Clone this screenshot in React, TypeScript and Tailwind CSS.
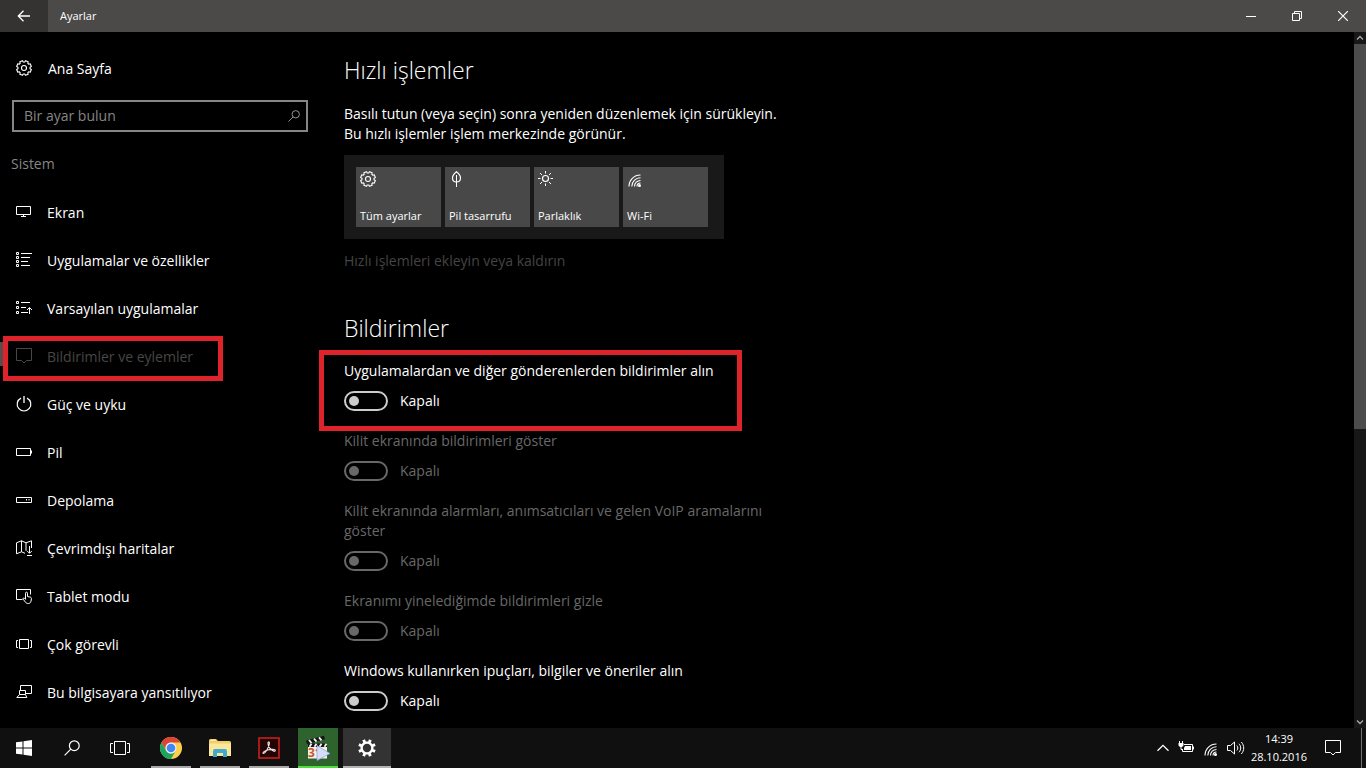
import React from 'react';

type IconProps = { className?: string };

// Outline of a cog wheel around (c, c)
const gearPath = (c: number, outer: number, inner: number, teeth: number, top: number, base: number) => {
    const points: string[] = [];
    for (let i = 0; i < teeth; i++) {
        const mid = ((i + 0.5) / teeth) * Math.PI * 2 - Math.PI / 2;
        const corners = [[inner, -base], [outer, -top], [outer, top], [inner, base]];
        corners.forEach(([r, offset]) => {
            points.push(`${(c + r * Math.cos(mid + offset)).toFixed(2)} ${(c + r * Math.sin(mid + offset)).toFixed(2)}`);
        });
    }
    return `M${points.join('L')}Z`;
};

const GearIcon: React.FC<IconProps> = ({ className }) => (
    <svg className={className} width="16" height="16" viewBox="0 0 16 16" fill="none" stroke="currentColor" strokeWidth="1.1" strokeLinejoin="round">
        <path d={gearPath(8, 7.5, 6.1, 8, 0.2, 0.27)} />
        <circle cx="8" cy="8" r="2.5" />
    </svg>
);

const SolidGearIcon: React.FC<IconProps> = ({ className }) => (
    <svg className={className} width="18" height="18" viewBox="0 0 18 18" fill="currentColor" fillRule="evenodd">
        <path d={`${gearPath(9, 8.9, 6.6, 8, 0.17, 0.21)}M9 4.8a4.2 4.2 0 1 0 0 8.4a4.2 4.2 0 1 0 0-8.400Z`} />
    </svg>
);

const SearchIcon: React.FC<IconProps> = ({ className }) => (
    <svg className={className} viewBox="0 0 16 16" fill="none" stroke="currentColor" strokeWidth="1.2">
        <circle cx="10.3" cy="5.7" r="4.9" />
        <path d="M6.8 9.2L.6 15.4" />
    </svg>
);

const BackIcon = () => (
    <svg width="14" height="12" viewBox="0 0 14 12" fill="none" stroke="currentColor" strokeWidth="1.3">
        <path d="M13 6H1.5M6.5 .8L1.3 6l5.2 5.2" />
    </svg>
);

const Glyph: React.FC<{ children: React.ReactNode }> = ({ children }) => (
    <svg className="shrink-0" width="16" height="16" viewBox="0 0 16 16" fill="none" stroke="currentColor">
        {children}
    </svg>
);

const DisplayGlyph = () => (
    <Glyph>
        <path d="M.5 2.5h14v8H.5zM7.5 11v1M5 12.5h5" />
    </Glyph>
);

const AppsGlyph = () => (
    <Glyph>
        <path d="M.5 .5h2v2h-2zM.5 4.5h2v2h-2zM.5 8.5h2v2h-2zM.5 12.5h2v2h-2zM5 1.5h11M5 5.5h9M5 9.5h7M5 13.5h9" />
    </Glyph>
);

const DefaultAppsGlyph = () => (
    <Glyph>
        <path d="M.5 1.5h2v2h-2zM.5 6.5h2v2h-2zM.5 11.5h2v2h-2zM5 2.5h9M5 7.5h5M5 12.5h7M13.5 14V7.8M11 10l2.5-2.5L16 10" />
    </Glyph>
);

const NotificationGlyph = () => (
    <Glyph>
        <path d="M.5 .5h15v12h-5L8 15l-2.5-2.5h-5z" />
    </Glyph>
);

const PowerGlyph = () => (
    <Glyph>
        <path d="M8 0v7" strokeWidth="1.3" />
        <path d="M5 2.1a6.8 6.8 0 1 0 6 0" strokeWidth="1.2" />
    </Glyph>
);

const BatteryGlyph = () => (
    <Glyph>
        <path d="M.5 4.5h14v7H.5zM15.5 6.5v3" />
    </Glyph>
);

const StorageGlyph = () => (
    <Glyph>
        <path d="M.5 5.5h15v5H.5zM10.5 7v1.5M13 7v1.5" />
    </Glyph>
);

const MapGlyph = () => (
    <Glyph>
        <path d="M.5 2.8L5.5 .8l4.5 2 5.5-2V8M.5 2.8v11l5-2 3.5 1.5M5.5 .8v11M10 2.8v8M13.5 6v7M11 10.8l2.5 2.5 2.5-2.5M11 15.5h5" />
    </Glyph>
);

const TabletGlyph = () => (
    <Glyph>
        <path d="M6.5 11.5h-6V1.5h14v5" />
        <path d="M9.5 11.5V5.2c0-1.4 2-1.4 2 0V8.5l2.7.6c1 .2 1.3.8 1.2 1.8l-.4 2.3c-.3 1.5-1.2 2.3-2.7 2.3-1.4 0-2.2-.4-3-1.5L7.2 11.2c-.5-1.1.6-1.7 1.3-1l1 1" />
    </Glyph>
);

const MultitaskGlyph = () => (
    <Glyph>
        <path d="M3.5 3.5h9v9h-9zM2 4.5H.5v7H2M14 4.5h1.5v7H14" />
    </Glyph>
);

const ProjectGlyph = () => (
    <Glyph>
        <path d="M4.5 6V1.5h11v8H10M3.5 6.5h6v4h-6zM3.5 10.5L.8 13.5h10l-1.3-3" />
    </Glyph>
);

const LeafIcon = () => (
    <Glyph>
        <path d="M7.5 .8C4.600 3 3.400 5 3.500 7.200c.1 2.200 1.500 3.800 4 3.800s3.900-1.600 4-3.800C11.600 5 10.400 3 7.500 .8z" strokeWidth="1.2" />
        <path d="M7.500 4v12" />
    </Glyph>
);

const SunIcon = () => (
    <Glyph>
        <circle cx="7.5" cy="7.5" r="3" strokeWidth="1.2" />
        <path d="M7.5 0v2.500M7.500 12.500V15M0 7.500h2.500M12.500 7.500H15M2 2l2 2M11 11l2 2M2 13l2-2M11 4l2-2" />
    </Glyph>
);

const WifiIcon = () => (
    <svg width="16" height="16" viewBox="0 0 16 16" fill="none" stroke="currentColor" strokeWidth="1.1">
        <path d="M2 15.5C2 9 7 4 13.5 4M4.800 15.500c0-4.900 3.800-8.700 8.700-8.700M7.500 15.500c0-3.400 2.600-6 6-6M10 15.500c0-2 1.500-3.500 3.500-3.500" />
        <circle cx="12.500" cy="14.500" r="1.500" fill="currentColor" stroke="none" />
    </svg>
);

const ChromeIcon = () => (
    <svg width="24" height="24" viewBox="0 0 24 24">
        <circle cx="12" cy="12" r="11" fill="#fbd04b" />
        <path d="M2.47 6.5A11 11 0 0 1 21.53 6.5H12A5.5 5.5 0 0 0 7.24 14.75z" fill="#db4437" />
        <path d="M2.47 6.5L7.24 14.75A5.5 5.5 0 0 0 16.76 14.75L12 23A11 11 0 0 1 2.47 6.5z" fill="#1da362" />
        <circle cx="12" cy="12" r="5.5" fill="#f1f1f1" />
        <circle cx="12" cy="12" r="4.3" fill="#4285f4" />
    </svg>
);

const FolderIcon = () => (
    <svg width="24" height="24" viewBox="0 0 24 24">
        <path d="M1 4.500Q1 3 2.500 3H8l2 2h11.500Q23 5 23 6.500V20H1z" fill="#f0cf6b" />
        <path d="M1 7.500h22V20H1z" fill="#fce69a" />
        <path d="M2.500 4.300h5" stroke="#fff4c8" />
        <path d="M5 21v-6q0-2 2-2h10q2 0 2 2v6h-4v-4H9v4z" fill="#3fa9d0" />
    </svg>
);

const AcrobatIcon = () => (
    <svg width="22" height="22" viewBox="0 0 22 22" fill="none">
        <path d="M1 1h20v20H1z" fill="#240303" stroke="#d4201c" strokeWidth="1.5" />
        <path
            d="M10.4 5c1-.4 1.3 1 .6 3.2-1 3.3-3.7 8.3-5.4 8.300-1.800 0 .2-2.500 4-3.500 3.200-.9 7.700-1 7.700.6 0 1.500-3.300.4-5.500-2.500C10 8.700 9.500 5.500 10.400 5z"
            stroke="#f1e9e9"
            strokeWidth="1.1"
        />
    </svg>
);

const ClapperIcon = () => (
    <svg width="26" height="26" viewBox="0 0 26 26">
        <path d="M3 11h19v12.500H3z" fill="#f4f1ea" />
        <path d="M1 5.500L19 .8l1 3.400L2 9z" fill="#151515" />
        <path d="M3 8.500h19V12H3z" fill="#151515" />
        <path d="M4 5l2.500 3M9 3.700l2.500 3M14 2.400l2.500 3M6.500 8.700l-2 3M11.500 8.700l-2 3M16.500 8.700l-2 3M21.500 8.700l-2 3" stroke="#f4f4f4" strokeWidth="1.8" />
        <text x="3" y="22" fill="#c9562b" fontSize="12" fontWeight="700">31</text>
        <path d="M12 10.500l13 8-13 7z" fill="#d5ddf8" stroke="#8b9cda" strokeWidth=".7" />
    </svg>
);

const navItems = [
    { label: 'Ekran', icon: DisplayGlyph },
    { label: 'Uygulamalar ve özellikler', icon: AppsGlyph },
    { label: 'Varsayılan uygulamalar', icon: DefaultAppsGlyph },
    { label: 'Bildirimler ve eylemler', icon: NotificationGlyph, active: true },
    { label: 'Güç ve uyku', icon: PowerGlyph },
    { label: 'Pil', icon: BatteryGlyph },
    { label: 'Depolama', icon: StorageGlyph },
    { label: 'Çevrimdışı haritalar', icon: MapGlyph },
    { label: 'Tablet modu', icon: TabletGlyph },
    { label: 'Çok görevli', icon: MultitaskGlyph },
    { label: 'Bu bilgisayara yansıtılıyor', icon: ProjectGlyph },
];

const quickActions = [
    { label: 'Tüm ayarlar', icon: GearIcon },
    { label: 'Pil tasarrufu', icon: LeafIcon },
    { label: 'Parlaklık', icon: SunIcon },
    { label: 'Wi-Fi', icon: WifiIcon },
];

const notificationSettings = [
    { id: 'apps', label: 'Uygulamalardan ve diğer gönderenlerden bildirimler alın', highlighted: true },
    { id: 'lock', label: 'Kilit ekranında bildirimleri göster', disabled: true },
    { id: 'alarms', label: 'Kilit ekranında alarmları, anımsatıcıları ve gelen VoIP aramalarını göster', disabled: true },
    { id: 'mirror', label: 'Ekranımı yinelediğimde bildirimleri gizle', disabled: true },
    { id: 'tips', label: 'Windows kullanırken ipuçları, bilgiler ve öneriler alın' },
];

const TitleBar = () => (
    <header className="flex h-8 shrink-0 bg-[#4c4a48]">
        <button aria-label="Geri" className="flex w-12 items-center justify-center bg-[#343331]">
            <BackIcon />
        </button>
        <h1 className="flex-1 px-3 text-[11px] leading-8">Ayarlar</h1>
        <button aria-label="Simge durumuna küçült" className="flex w-[46px] items-center justify-center">
            <svg width="10" height="10" viewBox="0 0 10 10" stroke="currentColor"><path d="M0 5.5h10" /></svg>
        </button>
        <button aria-label="Önceki boyut" className="flex w-[46px] items-center justify-center">
            <svg width="10" height="10" viewBox="0 0 10 10" fill="none" stroke="currentColor"><path d="M.5 2.5h7v7h-7zM2.5 2V.5h7v7H8" /></svg>
        </button>
        <button aria-label="Kapat" className="flex w-[46px] items-center justify-center">
            <svg width="10" height="10" viewBox="0 0 10 10" stroke="currentColor" strokeWidth="1.2"><path d="M0 0l10 10M10 0L0 10" /></svg>
        </button>
    </header>
);

const Sidebar = () => (
    <aside className="w-80 shrink-0 pt-3">
        <a href="#home" className="flex h-12 items-center gap-4 pl-4 text-sm">
            <GearIcon />
            <span className="pt-0.5">Ana Sayfa</span>
        </a>
        <div className="relative mt-2 px-3">
            <input
                type="text"
                aria-label="Bir ayar bulun"
                placeholder="Bir ayar bulun"
                className="h-8 w-[296px] border-2 border-[#868686] bg-black px-2.5 pb-0.5 text-sm placeholder:text-[#868686]"
            />
            <SearchIcon className="absolute top-2.5 right-5 h-3 w-3 text-[#a0a0a0]" />
        </div>
        <h2 className="h-14 pt-5 pl-[11px] text-sm leading-6 text-[#868686]">Sistem</h2>
        <nav>
            {navItems.map(({ label, icon: Icon, active }) => (
                <a key={label} href="#system" className={`relative flex h-12 items-center gap-[15px] pl-4 text-sm ${active ? 'text-[#484646]' : ''}`}>
                    {active && (
                        <>
                            <span className="absolute top-2.5 left-0 h-6 w-1 bg-[#5a4c4c]" />
                            <span className="absolute top-1 left-[3px] h-[45px] w-[220px] border-5 border-[#de232b]" />
                        </>
                    )}
                    <Icon />
                    <span className="pt-0.5">{label}</span>
                </a>
            ))}
        </nav>
    </aside>
);

interface ToggleRowProps {
    id: string;
    label: string;
    disabled?: boolean;
    highlighted?: boolean;
}

const ToggleRow: React.FC<ToggleRowProps> = ({ id, label, disabled, highlighted }) => (
    <div className={`relative ${disabled ? 'text-[#686868]' : ''}`}>
        {highlighted && <span className="pointer-events-none absolute -top-[11px] -left-[25px] h-[81px] w-[423px] border-5 border-[#de232b]" />}
        <label htmlFor={id} className="block text-sm leading-5">{label}</label>
        <div className="mt-2.5 flex h-5 items-center gap-3">
            <input
                id={id}
                type="checkbox"
                role="switch"
                disabled={disabled}
                className="relative h-5 w-11 appearance-none rounded-full border-2 border-[#cccccc] before:absolute before:top-[3px] before:left-[3px] before:h-2.5 before:w-2.5 before:rounded-full before:bg-[#cccccc] disabled:border-[#686868] disabled:before:bg-[#686868]"
            />
            <span className="text-sm leading-5">Kapalı</span>
        </div>
    </div>
);

const Content = () => (
    <main className="min-w-0 flex-1 pt-[22px] pl-6">
        <section>
            <h2 className="text-[23px] leading-8 font-light">Hızlı işlemler</h2>
            <p className="mt-[18px] max-w-[448px] text-sm leading-5">
                Basılı tutun (veya seçin) sonra yeniden düzenlemek için sürükleyin. Bu hızlı işlemler işlem merkezinde görünür.
            </p>
            <div className="mt-[11px] flex w-[380px] gap-1 bg-[#191919] p-3">
                {quickActions.map(({ label, icon: Icon }) => (
                    <button key={label} className="flex h-[60px] w-[85px] flex-col items-start justify-between bg-[#484848] px-1 pt-1 pb-[3px] text-left text-[11px] leading-4">
                        <Icon />
                        {label}
                    </button>
                ))}
            </div>
            <a href="#quick-actions" className="mt-3 inline-block text-sm leading-5 text-[#444444]">Hızlı işlemleri ekleyin veya kaldırın</a>
        </section>
        <section className="mt-10">
            <h2 className="text-[23px] leading-8 font-light">Bildirimler</h2>
            <div className="mt-[17px] flex max-w-[440px] flex-col gap-5">
                {notificationSettings.map((setting) => (
                    <ToggleRow key={setting.id} {...setting} />
                ))}
            </div>
        </section>
    </main>
);

const ScrollBar = () => (
    <div className="flex w-3 shrink-0 flex-col items-center bg-[#171717] text-[#a8a8a8]">
        <svg className="h-3 shrink-0" width="8" viewBox="0 0 8 12" fill="none" stroke="currentColor" strokeWidth="1.3"><path d="M1 7.5l3-3 3 3" /></svg>
        <div className="min-h-0 w-full flex-[385] bg-[#4c4c4c]" />
        <div className="flex-[287]" />
        <svg className="h-3 shrink-0" width="8" viewBox="0 0 8 12" fill="none" stroke="currentColor" strokeWidth="1.3"><path d="M1 4.5l3 3 3-3" /></svg>
    </div>
);

const taskbarApps = [
    { label: 'Google Chrome', icon: ChromeIcon, box: 'w-10', underline: 'bg-[#aaa8a6]' },
    { label: 'Dosya Gezgini', icon: FolderIcon, box: 'w-10', underline: 'bg-[#aaa8a6]' },
    { label: 'Acrobat Reader', icon: AcrobatIcon, box: 'w-10', underline: 'bg-[#aaa8a6]' },
    { label: 'Film', icon: ClapperIcon, box: 'w-10 bg-[#2e632d]', underline: 'bg-[#4fdc3c]' },
    { label: 'Ayarlar', icon: SolidGearIcon, box: 'w-12 bg-[#333333]', underline: 'bg-[#b4b4b4]' },
];

const TaskBar = () => (
    <footer className="flex h-10 shrink-0 bg-[#101010]">
        <button aria-label="Başlat" className="flex w-12 items-center justify-center">
            <svg width="16" height="16" viewBox="0 0 16 16" fill="currentColor">
                <path d="M0 2.3L6.5 1.4V7.5H0zM7.5 1.2L16 0v7.5H7.5zM0 8.5h6.5v6.1L0 13.7zM7.5 8.5H16V16l-8.5-1.2z" />
            </svg>
        </button>
        <button aria-label="Ara" className="flex w-12 items-center justify-center">
            <SearchIcon className="h-4 w-4" />
        </button>
        <button aria-label="Görev Görünümü" className="flex w-12 items-center justify-center">
            <svg width="20" height="16" viewBox="0 0 20 16" fill="none" stroke="currentColor">
                <path d="M4.5 1.5h11v13h-11zM3 3.5H.5v9H3M17 3.5h2.5v9H17" />
            </svg>
        </button>
        <div className="ml-[3px] flex flex-1 gap-px">
            {taskbarApps.map(({ label, icon: Icon, box, underline }) => (
                <button key={label} aria-label={label} className="flex w-12 justify-center">
                    <span className={`flex h-10 flex-col items-center ${box}`}>
                        <span className="flex flex-1 items-center pt-0.5"><Icon /></span>
                        <span className={`h-0.5 w-full ${underline}`} />
                    </span>
                </button>
            ))}
        </div>
        <div className="flex items-center gap-2">
            <button aria-label="Gizli simgeleri göster">
                <svg width="12" height="16" viewBox="0 0 12 16" fill="none" stroke="currentColor" strokeWidth="1.3"><path d="M.5 10.8L6 5.3l5.5 5.5" /></svg>
            </button>
            <button aria-label="Pil durumu">
                <svg width="18" height="16" viewBox="0 0 18 16" fill="none" stroke="currentColor">
                    <path d="M7 4.5h8.5v7h-10V9M16.500 6.500v3M2.500 1v2M5.500 1v2M4 7v2.500h2" />
                    <path d="M1.500 3h5v2.500L5 7H3L1.500 5.500zM8 6h6v4H7V8z" fill="currentColor" stroke="none" />
                </svg>
            </button>
            <button aria-label="Ağ">
                <WifiIcon />
            </button>
            <button aria-label="Ses">
                <svg width="18" height="16" viewBox="0 0 18 16" fill="none" stroke="currentColor">
                    <path d="M.5 5.500h3l4-3.500v12l-4-3.500h-3zM9.800 5.500c1.400 1.500 1.400 3.500 0 5M12 3.800c2.300 2.500 2.300 5.900 0 8.400M14.300 2c3.200 3.500 3.200 8.500 0 12" />
                </svg>
            </button>
        </div>
        <button className="px-1.5 text-center text-[11px] leading-[18px]">
            <span className="block">14:39</span>
            <span className="block">28.10.2016</span>
        </button>
        <button aria-label="İşlem Merkezi" className="flex w-12 items-center justify-center pr-2">
            <NotificationGlyph />
        </button>
        <button aria-label="Masaüstünü göster" className="w-[5px] border-l border-[#707070]" />
    </footer>
);

const App: React.FC = () => (
    <div className="flex h-screen flex-col overflow-hidden bg-black font-['Open_Sans',sans-serif] text-white">
        <TitleBar />
        <div className="flex min-h-0 flex-1 overflow-hidden">
            <Sidebar />
            <Content />
            <ScrollBar />
        </div>
        <TaskBar />
    </div>
);

export default App;
